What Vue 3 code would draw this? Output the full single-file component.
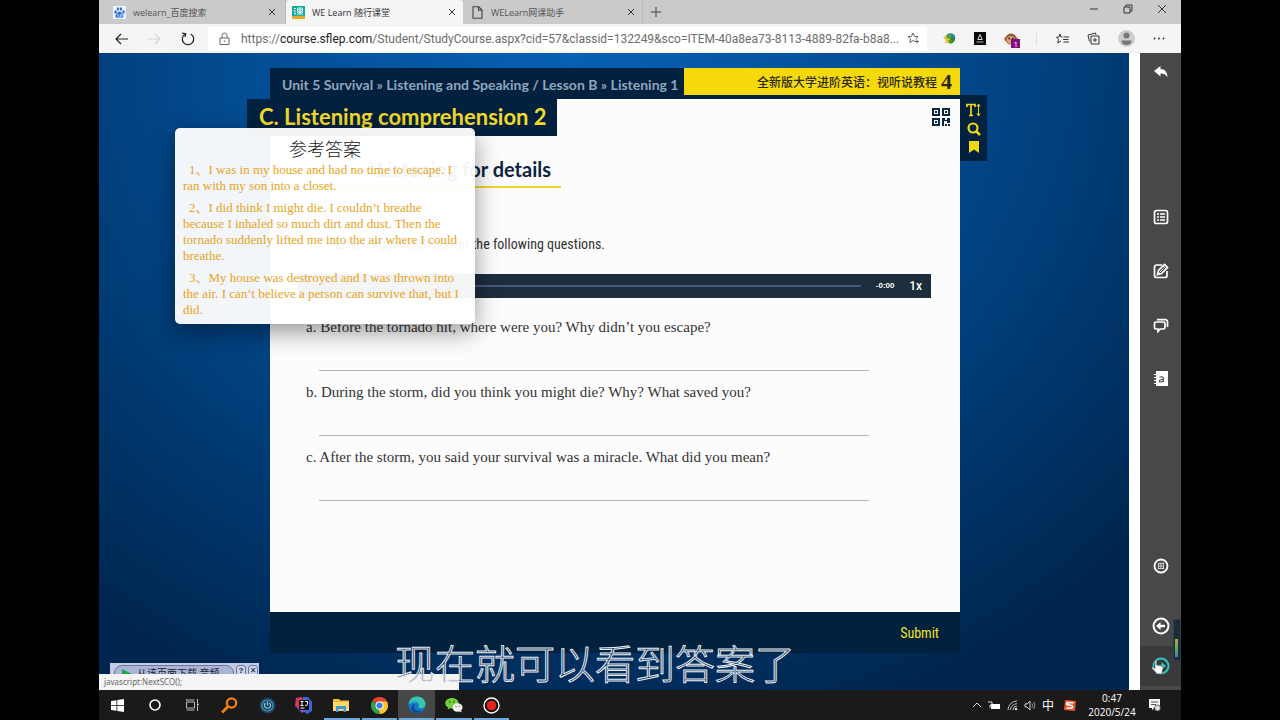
<script setup>
import { ref } from 'vue'

const tabs = [
  { title: 'welearn_百度搜索', icon: 'paw', active: false },
  { title: 'WE Learn 随行课堂', icon: 'course', active: true },
  { title: 'WELearn网课助手', icon: 'page', active: false },
]

const answers = [
  '1、I was in my house and had no time to escape. I ran with my son into a closet.',
  '2、I did think I might die. I couldn’t breathe because I inhaled so much dirt and dust. Then the tornado suddenly lifted me into the air where I could breathe.',
  '3、My house was destroyed and I was thrown into the air. I can’t believe a person can survive that, but I did.',
]

const questions = ref([
  { id: 'qa', text: 'a. Before the tornado hit, where were you? Why didn’t you escape?', answer: '' },
  { id: 'qb', text: 'b. During the storm, did you think you might die? Why? What saved you?', answer: '' },
  { id: 'qc', text: 'c. After the storm, you said your survival was a miracle. What did you mean?', answer: '' },
])
</script>

<template>
  <div class="screen">
    <div class="desktop">
      <header class="tabbar">
        <div v-for="t in tabs" :key="t.title" class="tab" :class="{ active: t.active }">
          <svg v-if="t.icon === 'paw'" class="fav" viewBox="0 0 13 13">
            <rect width="13" height="13" fill="#eef3fc" />
            <g fill="#2f6fdc">
              <ellipse cx="2.6" cy="6" rx="1.3" ry="1.7" /><ellipse cx="5" cy="3" rx="1.2" ry="1.8" />
              <ellipse cx="8" cy="3" rx="1.2" ry="1.8" /><ellipse cx="10.5" cy="6" rx="1.3" ry="1.7" />
              <path d="M6.5 5.5c1.6 0 2 1.5 3.2 2.7 1.500 1.500.8 3.600-1 3.600-.9 0-1.300-.2-2.200-.2s-1.300.2-2.200.2c-1.800 0-2.500-2.100-1-3.600C4.500 7 4.900 5.500 6.500 5.500z" />
            </g>
            <path d="M5 8v2.300h1.300M7.400 8.200v2.100h1.500V8.200" fill="none" stroke="#fff" stroke-width=".7" />
          </svg>
          <svg v-else-if="t.icon === 'course'" class="fav" viewBox="0 0 13 13">
            <rect width="13" height="13" fill="#12a89b" /><rect y="10" width="13" height="3" fill="#e8a72c" />
            <path d="M2 2.500h2M1.500 4.500H3v4l1-1M5.500 2h5v3.500h-5zM5.500 3.700h5M8 2v7.500M5 6.800h6M7.500 7L5 9.200M8.500 7L11 9.200" fill="none" stroke="#fff" stroke-width=".8" />
          </svg>
          <svg v-else class="fav" viewBox="0 0 13 13">
            <path d="M2 .8h5.800L11 4v8.200H2zM7.500 1v3.300H11" fill="none" stroke="#444" stroke-width="1.100" />
          </svg>
          <span class="tab-title">{{ t.title }}</span>
          <button class="plain" aria-label="Close tab">
            <svg width="8" height="8" viewBox="0 0 8 8"><path d="M1 1l6 6M7 1L1 7" stroke="#333" fill="none" /></svg>
          </button>
        </div>
        <button class="plain newtab" aria-label="New tab">
          <svg width="10" height="10" viewBox="0 0 10 10"><path d="M5 0v10M0 5h10" stroke="#444" fill="none" /></svg>
        </button>
        <div class="winbtns">
          <button class="plain" aria-label="Minimize"><svg width="10" height="10" viewBox="0 0 10 10"><path d="M1 5h8" stroke="#333" /></svg></button>
          <button class="plain" aria-label="Restore"><svg width="10" height="10" viewBox="0 0 10 10"><path d="M1 3h6v6H1zM3 3V1h6v6H7" fill="none" stroke="#333" /></svg></button>
          <button class="plain" aria-label="Close"><svg width="10" height="10" viewBox="0 0 10 10"><path d="M1 1l8 8M9 1L1 9" stroke="#333" /></svg></button>
        </div>
      </header>

      <nav class="toolbar">
        <button class="plain nav" aria-label="Back"><svg width="13" height="12" viewBox="0 0 13 12"><path d="M13 6H1M6 1L1 6l5 5" fill="none" stroke="#222" stroke-width="1.200" /></svg></button>
        <button class="plain nav" aria-label="Forward"><svg width="13" height="12" viewBox="0 0 13 12"><path d="M0 6h12M7 1l5 5-5 5" fill="none" stroke="#d4d4d4" stroke-width="1.200" /></svg></button>
        <button class="plain nav" aria-label="Refresh"><svg width="14" height="14" viewBox="0 0 14 14"><path d="M4.300 2A5.700 5.700 0 1 0 9.700 2M1.300 1.200l3.300.6-.5 3.200" fill="none" stroke="#222" stroke-width="1.200" /></svg></button>
        <div class="address">
          <svg width="11" height="14" viewBox="0 0 11 14"><path d="M1 6h9v6.500H1zM3 6V3.500a2.500 2.500 0 0 1 5 0V6" fill="none" stroke="#666" /><circle cx="5.500" cy="9.200" r=".8" fill="#666" /></svg>
          <div class="url" role="textbox" aria-label="Address" contenteditable="true" spellcheck="false">https://<b>course.sflep.com</b>/Student/StudyCourse.aspx?cid=57&amp;classid=132249&amp;sco=ITEM-40a8ea73-8113-4889-82fa-b8a8...</div>
          <button class="plain" aria-label="Add to favorites"><svg width="13" height="13" viewBox="0 0 13 13"><path d="M8.500 9.500L6 8.500 2.900 10.500l.7-3.700L1 4.700l3.500-.4L6 1l1.500 3.300 3.500.4-2.300 2.200M10 7.500v4M8 9.500h4" fill="none" stroke="#555" stroke-width=".9" /></svg></button>
        </div>
        <div class="exts">
          <button class="plain" aria-label="Download manager">
            <svg width="13" height="12" viewBox="0 0 13 12"><circle cx="7.500" cy="5" r="4.800" fill="#2f7fc6" /><path d="M4 1.500l4-1 1 3-3 3-3-2z" fill="#46a63a" /><path d="M9 4l3 1-1 4-4 2-2-3z" fill="#32872f" /><path d="M0 4l3-1 2 3 2-1v5H2l1-2z" fill="#e7c22f" /><path d="M5 7l4 0-2 4z" fill="#46a63a" /></svg>
          </button>
          <button class="plain" aria-label="Extension">
            <svg width="12" height="13" viewBox="0 0 12 13"><rect width="12" height="13" fill="#0a0a0a" /><path d="M6 2.500L3.800 7.500h4.400z" fill="none" stroke="#ddd" /><path d="M2.500 10h7" stroke="#999" stroke-width="1.200" /></svg>
          </button>
          <button class="plain monkey" aria-label="Script manager, 1 active">
            <svg width="14" height="12" viewBox="0 0 14 12"><circle cx="2" cy="6" r="2" fill="#c57d55" /><circle cx="12" cy="6" r="2" fill="#c57d55" /><circle cx="7" cy="6" r="5.500" fill="#9a5637" /><ellipse cx="7" cy="7" rx="4.300" ry="4" fill="#e2a37b" /><circle cx="5.200" cy="5.500" r="1" fill="#333" /><circle cx="8.800" cy="5.500" r="1" fill="#333" /></svg>
            <span class="badge">1</span>
          </button>
          <i class="sep"></i>
          <button class="plain" aria-label="Favorites"><svg width="13" height="12" viewBox="0 0 13 12"><path d="M6.500 3.900H4.900L4 1 2.900 4 .5 4.200l2 2L1.800 10 5 8M7.500 4H13M7 6.500h5.500M7.500 9H13" fill="none" stroke="#333" /></svg></button>
          <button class="plain" aria-label="Collections"><svg width="13" height="13" viewBox="0 0 13 13"><path d="M4 4h8v8H4zM2.500 9.500L1 3l7.500-2 .5 2M8 6v4M6 8h4" fill="none" stroke="#333" /></svg></button>
          <button class="plain" aria-label="Profile"><svg width="17" height="17" viewBox="0 0 17 17"><circle cx="8.500" cy="8.500" r="8.500" fill="#d0cecd" /><circle cx="8.500" cy="5.500" r="3" fill="#777" /><path d="M3.500 10.500h10c0 3-2 4.500-5 4.500s-5-1.500-5-4.500z" fill="#777" /></svg></button>
          <button class="plain" aria-label="More"><svg width="12" height="3" viewBox="0 0 12 3"><g fill="#333"><circle cx="1.500" cy="1.500" r=".9" /><circle cx="6" cy="1.500" r=".9" /><circle cx="10.500" cy="1.500" r=".9" /></g></svg></button>
        </div>
      </nav>

      <div class="content">
        <main class="page">
          <div class="lesson">
            <div class="crumbrow">
              <div class="crumbs">Unit 5 Survival » Listening and Speaking / Lesson B » Listening 1</div>
              <div class="book"><span>全新版大学进阶英语：视听说教程</span><b>4</b></div>
            </div>
            <section class="sheet">
              <div class="sheethead">
                <h1>C. Listening comprehension 2</h1>
                <svg class="qr" viewBox="0 0 18 18"><g fill="none" stroke="#0a2744" stroke-width="2"><path d="M1 1h6v6H1zM11 1h6v6h-6zM1 11h6v6H1z" /></g><g fill="#0a2744"><path d="M3 3h2v2H3zM13 3h2v2h-2zM3 13h2v2H3zM10 10h3v2h2v-2h3v5h-3v-2h-3v5h-2zM13 16h2v2h-2zM16 16h2v2h-2z" /></g></svg>
              </div>
              <h2>Listening for details</h2>
              <p class="direction">Listen again and answer the following questions.</p>
              <div class="player">
                <div class="track"></div>
                <span class="time">-0:00</span>
                <button class="plain rate">1x</button>
              </div>
              <div v-for="q in questions" :key="q.id" class="question">
                <label :for="q.id">{{ q.text }}</label>
                <input :id="q.id" v-model="q.answer" type="text" />
              </div>
            </section>
            <footer class="submitbar"><button class="plain submit">Submit</button></footer>
            <div class="tools">
              <button class="plain" aria-label="Text size"><svg width="15" height="14" viewBox="0 0 15 14"><path d="M1 4V1.500h8V4M5 1.500v11M3 12.500h4" fill="none" stroke="#f1d90f" stroke-width="1.700" /><path d="M12.500 2v10M11 3.500L12.500 1 14 3.500M11 10.500l1.500 2.500 1.500-2.500" fill="none" stroke="#f1d90f" /></svg></button>
              <button class="plain" aria-label="Search"><svg width="14" height="14" viewBox="0 0 14 14"><circle cx="6" cy="6" r="4.500" fill="none" stroke="#f1d90f" stroke-width="2.200" /><path d="M9 9l4 4" stroke="#f1d90f" stroke-width="2.500" /></svg></button>
              <button class="plain" aria-label="Bookmark"><svg width="10" height="12" viewBox="0 0 10 12"><path d="M0 0h10v12L5 8.500 0 12z" fill="#f1d90f" /></svg></button>
            </div>
          </div>
        </main>

        <aside class="side">
          <button class="plain back" aria-label="Return"><svg width="14" height="12" viewBox="0 0 14 12"><path d="M0 5L6.500 0v3C11 3 13.500 6 13.500 11.500 12 8.500 10 7.500 6.500 7.500v3z" fill="#fff" /></svg></button>
          <div class="middle">
            <button class="plain" aria-label="Contents"><svg width="16" height="16" viewBox="0 0 16 16"><rect x="1.500" y="1.500" width="13" height="13" rx="2" fill="none" stroke="#fff" stroke-width="1.700" /><path d="M4 5h2M4 8h2M4 11h2M7 5h5M7 8h5M7 11h5" stroke="#fff" stroke-width="1.700" /></svg></button>
            <button class="plain" aria-label="Notes"><svg width="16" height="16" viewBox="0 0 16 16"><path d="M9 2H3.500a2 2 0 0 0-2 2v8.500a2 2 0 0 0 2 2h8.500a2 2 0 0 0 2-2V8" fill="none" stroke="#fff" stroke-width="1.700" /><path d="M4.500 11.500l1-4 6-6 3 3-6 6z" fill="none" stroke="#fff" stroke-width="1.700" /><path d="M10 3l3 3M6.500 9.500l4-4" stroke="#fff" /></svg></button>
            <button class="plain" aria-label="Discussion"><svg width="16" height="16" viewBox="0 0 16 16"><path d="M3 5h7.500a1.500 1.500 0 0 1 1.500 1.500v4a1.500 1.500 0 0 1-1.500 1.500H7l-2 2.500V12H3a1.500 1.500 0 0 1-1.500-1.500v-4A1.500 1.500 0 0 1 3 5z" fill="none" stroke="#fff" stroke-width="1.700" /><path d="M4 2.700h8.500a2 2 0 0 1 2 2V10" fill="none" stroke="#fff" stroke-width="1.700" /></svg></button>
            <button class="plain" aria-label="Dictionary"><svg width="14" height="16" viewBox="0 0 14 16"><path d="M2 0h12v15H2v-2H0v-1h2v-2H0V9h2V7H0V6h2V4H0V3h2z" fill="#fff" /><path d="M5.500 6.500Q8 5 9.300 6.700V11M9.300 8.500C4.500 8 4.500 11.500 7 11c1 0 2.300-1 2.300-2" fill="none" stroke="#444" stroke-width="1.100" /></svg></button>
          </div>
          <div class="lower">
            <button class="plain wrong" aria-label="Mistakes"><svg width="16" height="16" viewBox="0 0 16 16"><circle cx="8" cy="8" r="6.500" fill="none" stroke="#fff" stroke-width="1.800" /><path d="M5 5.500h6M5 8h6M5 10.500h6M5.500 5v6.500M8 4.500V11M10.500 4.500v7" stroke="#ccc" /></svg></button>
            <button class="plain" aria-label="Previous"><svg width="18" height="18" viewBox="0 0 18 18"><circle cx="9" cy="9" r="7.500" fill="none" stroke="#fff" stroke-width="2" /><path d="M4 9l4.500-4v2.700H13v2.600H8.500V13z" fill="#fff" /></svg></button>
            <button class="plain next" aria-label="Next">
              <svg width="18" height="18" viewBox="0 0 18 18"><circle cx="9" cy="9" r="7.500" fill="none" stroke="#2fc7c0" stroke-width="2" /><path d="M14 9L9.500 5v2.700H5v2.600h4.500V13z" fill="#2fc7c0" /></svg>
              <svg class="hand" width="13" height="16" viewBox="0 0 13 16"><path d="M4 1.500c0-1 1.800-1 1.800 0V6l4.700 1c1.500.4 1.700 1 1.500 2.500l-.8 3.500V15H5v-1.500L1 9.500C.3 8.500 1.300 7.700 2.200 8.300L4 9.500z" fill="#fff" stroke="#333" stroke-width=".6" /></svg>
            </button>
          </div>
          <div class="meter"><i></i></div>
        </aside>

        <div class="popup">
          <h3>参考答案</h3>
          <p v-for="a in answers" :key="a">{{ a }}</p>
        </div>

        <div class="dlbar">
          <button class="dlmain"><svg width="10" height="9" viewBox="0 0 10 9"><path d="M0 0l10 5-10 4z" fill="#1fa84c" /></svg>从该页面下载 音频</button>
          <button class="dlsmall">?</button>
          <button class="dlsmall">✕</button>
        </div>
        <div class="status">javascript:NextSCO();</div>
      </div>

      <footer class="taskbar">
        <div class="apps">
          <button class="plain" aria-label="Start"><svg width="13" height="13" viewBox="0 0 13 13"><path d="M0 2l5.500-.8V6H0zM6.300 1L13 0v6H6.300zM0 6.800h5.500v4.900L0 11zM6.300 6.800H13V13l-6.700-1z" fill="#fff" /></svg></button>
          <button class="plain" aria-label="Cortana"><svg width="12" height="12" viewBox="0 0 12 12"><circle cx="6" cy="6" r="5" fill="none" stroke="#fff" stroke-width="1.600" /></svg></button>
          <button class="plain" aria-label="Task view"><svg width="13" height="12" viewBox="0 0 13 12"><path d="M.5 1.500V0M.5 3h8v6h-8zM.5 1h8M.5 11h8M11.500 0v4M11.500 7v5" fill="none" stroke="#bbb" /><rect x="11" y="4.500" width="1.500" height="2" fill="#fff" /></svg></button>
          <button class="plain" aria-label="Everything"><svg width="17" height="17" viewBox="0 0 17 17"><circle cx="10.500" cy="6" r="4.700" fill="none" stroke="#f5820d" stroke-width="2.200" /><path d="M7 9.500L1 15.500" stroke="#f5820d" stroke-width="3" /></svg></button>
          <button class="plain" aria-label="Power tool"><svg width="17" height="17" viewBox="0 0 17 17"><circle cx="8.500" cy="8.500" r="8" fill="#223e55" /><circle cx="8.500" cy="8.500" r="5.500" fill="none" stroke="#3fa3c4" stroke-width="1.200" /><path d="M6.500 6a3 3 0 1 0 4 0M8.500 4.500v4" fill="none" stroke="#7fd5ec" stroke-width="1.200" /></svg></button>
          <button class="plain" aria-label="IntelliJ IDEA"><svg width="18" height="18" viewBox="0 0 18 18"><path d="M1 2l5-1 5 5-7 7-4-3z" fill="#e0355b" /><path d="M8 1l5 0 4 5v9l-5 3-5-4z" fill="#3868d8" /><path d="M2 12l5 5 5-3-5-6z" fill="#8a4bd0" /><rect x="4" y="4" width="10" height="10" fill="#0b0b0b" /><path d="M5.500 5.500h3M7 5.500v4M5.500 9.500h3M10 5.500h2.500v3Q12.500 9.700 10 9.300M5.500 12h4" fill="none" stroke="#fff" /></svg></button>
          <button class="plain run" aria-label="File Explorer"><svg width="17" height="14" viewBox="0 0 17 14"><path d="M0 1h6l1.500 1.500H16V13H0z" fill="#f4b93a" /><path d="M0 4h16v9H0z" fill="#ffd967" /><path d="M3 8h10v6h-2.500v-3h-5v3H3z" fill="#3c9ad8" /></svg></button>
          <button class="plain run" aria-label="Chrome"><svg width="17" height="17" viewBox="0 0 17 17"><path d="M8.500 8.500L1.100 4.200a8.500 8.500 0 0 1 14.800 0z" fill="#e5412f" /><path d="M8.500 8.500h7.900L15.900 4.200a8.500 8.500 0 0 1-7.400 12.800z" fill="#fbc52a" /><path d="M8.500 8.500l0 8.500A8.500 8.500 0 0 1 1.100 4.200z" fill="#2ea04f" /><path d="M8.500 4.500h7.500l.4 4-4 2-3 6-2-4z" fill="#fbc52a" /><circle cx="8.500" cy="8.500" r="4" fill="#fff" /><circle cx="8.500" cy="8.500" r="3.100" fill="#3d7fe8" /></svg></button>
          <button class="plain run current" aria-label="Edge"><svg width="18" height="18" viewBox="0 0 18 18"><circle cx="9" cy="9" r="8.500" fill="#1478cc" /><path d="M.6 8C1.200 3.500 4.500.5 9 .5c5 0 8.500 3.600 8.500 7.500 0 2.800-2.200 4.200-4.500 4.200-2 0-3-.8-2.500-1.700 1-1.500.3-4-2.500-4C5 6.500 2 7 .6 8z" fill="#38c7a9" /><path d="M.6 8C2 5 5 4.200 8 4.800c2 .4 3.200 1.700 3.300 3.200C8 4.800 2.500 6 .6 8z" fill="#2aa4e4" /><path d="M7 8c-3 4 1 8 7 6.500-3 3.500-8.500 3.500-10.500-.5C2.300 11.500 4 8.500 7 8z" fill="#0c4a94" /></svg></button>
          <button class="plain run" aria-label="WeChat"><svg width="18" height="15" viewBox="0 0 18 15"><path d="M7 0c4 0 6.500 2.300 6.500 5.200S11 10.500 7 10.500c-.8 0-1.500-.1-2-.3L2.500 11.500l.5-2.200C1 8.300.300 6.800.300 5.200.300 2.300 3 0 7 0z" fill="#76ce3c" /><ellipse cx="12.500" cy="9.500" rx="5" ry="4.200" fill="#f2f2f2" /><path d="M14 13l2.500 1.500-.3-2.500z" fill="#f2f2f2" /><g fill="#356a18"><circle cx="4.800" cy="3.800" r=".9" /><circle cx="9" cy="3.800" r=".9" /></g><g fill="#777"><circle cx="11" cy="8.500" r=".7" /><circle cx="14.200" cy="8.500" r=".7" /></g></svg></button>
          <button class="plain run" aria-label="Recorder"><svg width="17" height="17" viewBox="0 0 17 17"><circle cx="8.500" cy="8.500" r="7.500" fill="#111" stroke="#fff" stroke-width="1.400" /><circle cx="8.500" cy="8.500" r="4.800" fill="#e3231c" /></svg></button>
        </div>
        <div class="tray">
          <svg width="10" height="6" viewBox="0 0 10 6"><path d="M1 5l4-4 4 4" fill="none" stroke="#ddd" /></svg>
          <svg width="13" height="9" viewBox="0 0 13 9"><path d="M3 3h9v5H3z" fill="#fff" /><path d="M0 1h4v3H2v3" fill="none" stroke="#ddd" /></svg>
          <svg width="11" height="11" viewBox="0 0 11 11"><path d="M1 10A9 9 0 0 1 10 1M3.500 10A6.500 6.500 0 0 1 10 3.700M6 10a4 4 0 0 1 4-4" fill="none" stroke="#bbb" /><circle cx="9" cy="9" r="1.300" fill="#ddd" /></svg>
          <svg width="12" height="11" viewBox="0 0 12 11"><path d="M1 4h2l3-3v9L3 7H1z" fill="none" stroke="#ccc" /><path d="M8 3.500q1.200 2 0 4M9.800 2q2.200 3.500 0 7" fill="none" stroke="#999" /></svg>
          <span class="ime">中</span>
          <svg class="sogou" width="12" height="11" viewBox="0 0 12 11"><path d="M1 0l11 1-1 10-11-1z" fill="#e9532d" /><path d="M9.500 2.700L4 2.500Q2 3 3 4.500l5 1.300q1.500 1.500-.5 2.500L2.500 8" fill="none" stroke="#fff" stroke-width="1.600" /></svg>
          <time class="clock"><span>0:47</span><span>2020/5/24</span></time>
          <svg width="12" height="13" viewBox="0 0 12 13"><path d="M0 0h11v9H5l-2 2.500V9H0z" fill="#f3f3f3" /><path d="M2 3h7M2 5.500h5" stroke="#555" /><circle cx="8.500" cy="9" r="3" fill="#ddd" stroke="#333" stroke-width=".7" /></svg>
        </div>
      </footer>

      <div class="caption">现在就可以看到答案了</div>
    </div>
  </div>
</template>

<style>
body { margin: 0; background: #000; }
</style>

<style scoped>
* { box-sizing: border-box; }
h1, h2, h3, p { margin: 0; }
svg { display: block; flex: none; }
.plain { border: 0; padding: 0; background: none; color: inherit; font: inherit; display: flex; align-items: center; justify-content: center; }
.screen { min-height: 100vh; display: flex; background: #000; padding: 0 99px; font-family: "Open Sans", "Noto Sans CJK SC", sans-serif; }
.desktop { position: relative; flex: 1; min-width: 0; display: flex; flex-direction: column; }

.tabbar { height: 24px; display: flex; background: #cacaca; }
.tab { width: 180px; display: flex; align-items: center; gap: 7px; padding: 0 7px 0 8px; font-size: 9px; color: #555; border-right: 1px solid #b9b9b9; }
.tab:first-child { width: 187px; padding: 0 9px 0 14px; }
.tab.active { width: 177px; padding-left: 6px; background: #f5f5f5; color: #333; border-radius: 3px 3px 0 0; border-right: 0; }
.fav { width: 13px; height: 13px; }
.tab-title { flex: 1; white-space: nowrap; }
.newtab { width: 26px; }
.winbtns { margin-left: auto; margin-right: 2px; display: flex; height: 18px; }
.winbtns button { width: 34px; }

.toolbar { height: 29px; display: flex; align-items: center; background: #f5f5f5; padding-left: 6px; }
.nav { width: 33px; height: 28px; }
.address { flex: 1; min-width: 0; height: 24px; margin-left: 4px; padding: 0 7px 0 11px; background: #fff; display: flex; align-items: center; }
.url { flex: 1; min-width: 0; margin: 0 1px 0 11px; overflow: hidden; white-space: nowrap; font: 400 12px/20px Roboto, sans-serif; color: #6c6c6c; outline: none; }
.url b { font-weight: 400; color: #222; }
.exts { flex: none; width: 254px; padding: 0 16px; display: flex; align-items: center; justify-content: space-between; }
.sep { width: 1px; height: 12px; background: #ddd; }
.monkey { position: relative; }
.badge { position: absolute; left: 7px; top: 6px; width: 9px; height: 9px; background: #80107f; color: #fff; font-size: 8px; line-height: 9px; text-align: center; }

.content { position: relative; flex: 1; display: flex; background: #fff; overflow: hidden; }
.page { flex: 1; min-width: 0; margin-right: 11px; padding: 15px 169px 37px 171px; background: radial-gradient(ellipse 75% 110% at 46% 0%, #0760b4 0%, #044f97 38%, #003b74 70%, #00264f 100%); display: flex; flex-direction: column; }
.lesson { position: relative; flex: 1; display: flex; flex-direction: column; }
.crumbrow { display: flex; height: 31px; background: #02213f; }
.crumbs { flex: 3; min-width: 0; padding-left: 12px; font: 700 14px/33px Lato, sans-serif; color: #8fa5bc; white-space: nowrap; }
.book { flex: 2; min-width: 0; height: 27px; padding-right: 8px; background: #f6d90b; display: flex; align-items: center; justify-content: flex-end; gap: 4px; color: #2c2a18; font: 500 12px/30px "Noto Sans CJK SC", sans-serif; white-space: nowrap; }
.book b { font: 700 22px/30px "Liberation Serif", serif; }
.sheet { flex: 1; background: #fcfcfc; }
.sheethead { display: flex; justify-content: space-between; height: 37px; padding-right: 10px; }
h1 { margin-left: -23px; width: 310px; padding-left: 12px; background: #02213f; color: #f1d92a; font: 700 22px/36px Lato, sans-serif; white-space: nowrap; }
.qr { width: 18px; height: 18px; margin-top: 9px; }
h2 { width: 254px; margin: 17px 0 0 37px; padding-right: 10px; border-bottom: 2px solid #edd532; color: #0d2442; font: 700 20px/33px Lato, sans-serif; text-align: right; }
.direction { width: 298px; margin: 46px 0 0 37px; color: #333; font: 400 14px/20px "Roboto Condensed", "Liberation Sans Narrow", Roboto, sans-serif; text-align: right; white-space: nowrap; }
.player { height: 24px; margin: 20px 29px 19px 28px; padding: 0 9px 0 16px; display: flex; align-items: center; background: #1c2d3e; color: #fff; }
.track { flex: 1; height: 2px; background: #485978; }
.time { width: 48px; text-align: center; font: 700 8px/24px "Liberation Sans", sans-serif; }
.rate { font: 500 12px/24px Roboto, sans-serif; }
.question { height: 65px; margin: 0 91px 0 36px; display: flex; flex-direction: column; }
.question label { font: 400 15px/20px "Liberation Serif", serif; color: #333; white-space: nowrap; }
.question input { height: 34px; margin-left: 13px; padding: 0 4px; border: 0; border-bottom: 1px solid #b4b4b4; background: none; font: 400 15px/20px "Liberation Serif", serif; outline: none; }
.submitbar { height: 41px; padding-right: 21px; background: #02213f; display: flex; justify-content: flex-end; }
.submit { color: #f1e11b; font: 400 14px/40px "Roboto Condensed", "Liberation Sans Narrow", Roboto, sans-serif; }
.tools { position: absolute; left: 100%; top: 27px; width: 27px; height: 66px; padding: 8px 0; background: #02213f; display: flex; flex-direction: column; align-items: center; justify-content: space-between; }

.side { position: relative; width: 41px; background: #484848; display: flex; flex-direction: column; }
.back { height: 38px; }
.middle { margin-top: 99px; display: flex; flex-direction: column; }
.middle button { height: 54px; }
.lower { margin-top: auto; display: flex; flex-direction: column; padding-bottom: 4px; }
.lower button { height: 40px; }
.lower .wrong { margin-bottom: 20px; }
.next { position: relative; background: #3a3a3a; }
.hand { position: absolute; left: 11px; top: 13px; }
.meter { position: absolute; right: 0; bottom: 29px; width: 8px; height: 42px; padding: 3px 1px; background: #1f2c38; border: 1px solid #2c3f50; display: flex; align-items: flex-end; }
.meter i { width: 3px; height: 18px; background: linear-gradient(#b7a548, #5cae62, #3c8ba0); }

.popup { position: absolute; left: 76px; top: 75px; width: 300px; padding: 8px 12px 0 8px; background: rgba(255, 255, 255, .95); border-radius: 5px; box-shadow: 0 8px 24px rgba(0, 0, 0, .4); }
.popup h3 { font: 300 18px/24px "Noto Sans CJK SC", sans-serif; color: #222; text-align: center; margin: 0 -4px 2px 0; }
.popup p { font: 400 13px/16px "Liberation Serif", "Noto Sans CJK SC", serif; color: #e9a420; margin-bottom: 6px; text-indent: 6px; }

.dlbar { position: absolute; left: 11px; bottom: 3px; width: 149px; height: 24px; padding: 2px 1px 0 4px; background: #c3cbe6; display: flex; gap: 2px; }
.dlbar button { border: 1px solid #6b779d; border-radius: 3px; background: #cdd5ec; color: #223; padding: 0; height: 18px; }
.dlbar .dlmain { flex: 1; border-radius: 8px; background: #a9b5d6; display: flex; align-items: flex-start; gap: 5px; padding: 1px 7px; font: 400 10px/14px "Liberation Serif", "Noto Sans CJK SC", serif; white-space: nowrap; }
.dlmain svg { margin-top: 2px; }
.dlbar .dlsmall { width: 10px; font: 700 8px/8px "Liberation Sans", "DejaVu Sans", sans-serif; height: 11px; }
.status { position: absolute; left: 0; bottom: 0; width: 360px; height: 16px; padding-left: 5px; background: #f5f5f5; color: #666; font: 400 8px/16px "Noto Sans", sans-serif; }

.taskbar { height: 30px; display: flex; justify-content: space-between; background: #1b1a1b; color: #fff; }
.apps { width: 411px; display: flex; }
.apps button { flex: 1; border-bottom: 2px solid transparent; padding-top: 2px; }
.apps .run { border-image: linear-gradient(90deg, transparent 8%, #6fa9dc 8%, #6fa9dc 92%, transparent 92%) 2; }
.apps .current { background: #474747; }
.tray { display: flex; align-items: center; gap: 6px; padding-right: 20px; }
.ime { font: 400 12px/30px "Noto Sans CJK SC", sans-serif; }
.sogou { margin-left: 4px; }
.clock { width: 52px; margin: 0 5px 0 4px; display: flex; flex-direction: column; text-align: center; font-size: 10px; line-height: 14px; }

.caption { position: absolute; left: 0; right: 0; bottom: 34px; padding-right: 90px; text-align: center; font: 300 40px/48px "Noto Sans CJK SC", sans-serif; color: rgba(6, 32, 62, .5); -webkit-text-stroke: 1px #e8edf2; pointer-events: none; }
</style>
